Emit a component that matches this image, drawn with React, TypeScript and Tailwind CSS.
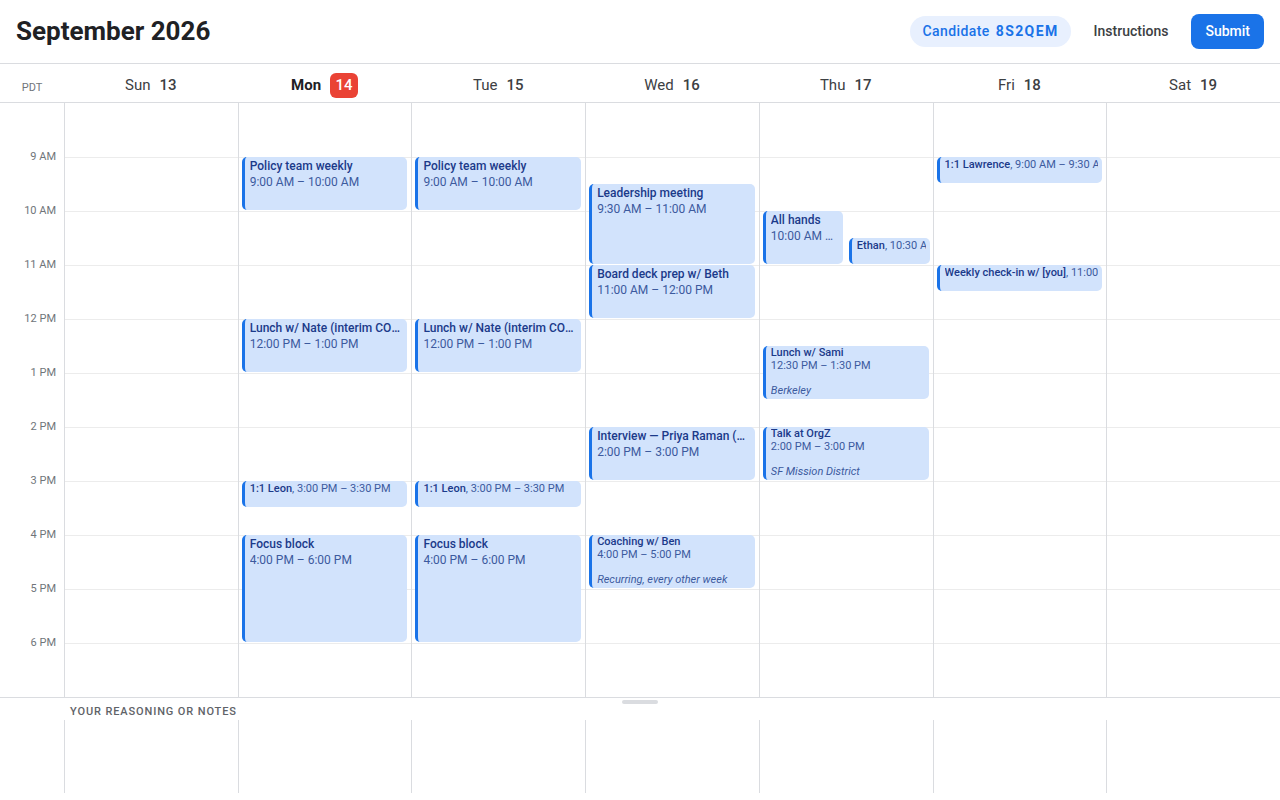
import React from "react";

const HOUR = 54;
const START = 8;

type Ev = {
  day: number;
  start: number;
  end: number;
  title: string;
  time: string;
  kind: "std" | "loc" | "compact";
  loc?: string;
  left?: number;
  right?: number;
};

const days = [
  { name: "Sun", num: 13 },
  { name: "Mon", num: 14, today: true },
  { name: "Tue", num: 15 },
  { name: "Wed", num: 16 },
  { name: "Thu", num: 17 },
  { name: "Fri", num: 18 },
  { name: "Sat", num: 19 },
];

const hours = ["", "9 AM", "10 AM", "11 AM", "12 PM", "1 PM", "2 PM", "3 PM", "4 PM", "5 PM", "6 PM"];

const events: Ev[] = [
  // Mon + Tue share the same recurring stuff
  ...[1, 2].flatMap((d) => [
    { day: d, start: 9, end: 10, title: "Policy team weekly", time: "9:00 AM – 10:00 AM", kind: "std" as const },
    { day: d, start: 12, end: 13, title: "Lunch w/ Nate (interim COO)", time: "12:00 PM – 1:00 PM", kind: "std" as const },
    { day: d, start: 15, end: 15.5, title: "1:1 Leon", time: "3:00 PM – 3:30 PM", kind: "compact" as const },
    { day: d, start: 16, end: 18, title: "Focus block", time: "4:00 PM – 6:00 PM", kind: "std" as const },
  ]),
  { day: 3, start: 9.5, end: 11, title: "Leadership meeting", time: "9:30 AM – 11:00 AM", kind: "std" },
  { day: 3, start: 11, end: 12, title: "Board deck prep w/ Beth", time: "11:00 AM – 12:00 PM", kind: "std" },
  { day: 3, start: 14, end: 15, title: "Interview — Priya Raman (candidate)", time: "2:00 PM – 3:00 PM", kind: "std" },
  { day: 3, start: 16, end: 17, title: "Coaching w/ Ben", time: "4:00 PM – 5:00 PM", kind: "loc", loc: "Recurring, every other week" },
  { day: 4, start: 10, end: 11, title: "All hands", time: "10:00 AM – 11:00 AM", kind: "std", left: 3, right: 90 },
  { day: 4, start: 10.5, end: 11, title: "Ethan", time: "10:30 AM – 11:00 AM", kind: "compact", left: 89, right: 3 },
  { day: 4, start: 12.5, end: 13.5, title: "Lunch w/ Sami", time: "12:30 PM – 1:30 PM", kind: "loc", loc: "Berkeley" },
  { day: 4, start: 14, end: 15, title: "Talk at OrgZ", time: "2:00 PM – 3:00 PM", kind: "loc", loc: "SF Mission District" },
  { day: 5, start: 9, end: 9.5, title: "1:1 Lawrence", time: "9:00 AM – 9:30 AM", kind: "compact" },
  { day: 5, start: 11, end: 11.5, title: "Weekly check-in w/ [you]", time: "11:00 AM – 11:30 AM", kind: "compact" },
];

function EventCard({ ev }: { ev: Ev }) {
  const top = (ev.start - START) * HOUR;
  const height = (ev.end - ev.start) * HOUR - 1;
  return (
    <div
      className="absolute overflow-hidden rounded-[5px] border-l-[3px] border-[#1a73e8] bg-[#d2e3fc] pl-[5px] pr-1"
      style={{ top, height, left: ev.left ?? 3, right: ev.right ?? 4 }}
    >
      {ev.kind === "std" && (
        <div className="pt-px text-[12px] leading-4">
          <div className="truncate font-medium text-[#1b3a8a]">{ev.title}</div>
          <div className="truncate text-[#3c5a9e]">{ev.time}</div>
        </div>
      )}
      {ev.kind === "loc" && (
        <div className="text-[11px] leading-[13px]">
          <div className="truncate font-medium text-[#1b3a8a]">{ev.title}</div>
          <div className="truncate text-[#3c5a9e]">{ev.time}</div>
          <div className="mt-[12px] truncate italic text-[#3c5a9e]">{ev.loc}</div>
        </div>
      )}
      {ev.kind === "compact" && (
        <div className="overflow-hidden whitespace-nowrap pt-px text-[11px] leading-[13px]">
          <span className="font-medium text-[#1b3a8a]">{ev.title}</span>
          <span className="text-[#3c5a9e]">, {ev.time}</span>
        </div>
      )}
    </div>
  );
}

export default function App() {
  return (
    <div className="flex h-screen flex-col overflow-hidden bg-white font-[Roboto,sans-serif] text-[#202124]">
      {/* top bar */}
      <header className="flex h-16 shrink-0 items-center justify-between border-b border-[#dadce0] pl-4 pr-4">
        <h1 className="text-[26px] font-bold text-[#202124]">September 2026</h1>
        <div className="flex items-center gap-[11px]">
          <div className="flex h-[31px] items-center gap-[6px] rounded-full bg-[#e8f0fe] px-3 text-[14px] text-[#1a73e8]">
            <span className="font-medium tracking-[0.03em]">Candidate</span>
            <span className="font-bold tracking-[0.1em]">8S2QEM</span>
          </div>
          <button className="px-3 text-[14px] font-medium text-[#3c4043]">Instructions</button>
          <button className="h-[35px] rounded-lg bg-[#1a73e8] px-[14px] text-[14px] font-medium text-white">
            Submit
          </button>
        </div>
      </header>

      {/* day header row */}
      <div className="grid h-[39px] shrink-0 grid-cols-[64px_repeat(7,1fr)] border-b border-[#dadce0]">
        <div className="flex items-end justify-center pb-[7px] text-[11px] leading-[14px] text-[#70757a]">PDT</div>
        {days.map((d) => (
          <div key={d.name} className="flex items-center justify-center gap-[9px] pt-[4px] text-[15px]">
            <span className={d.today ? "font-bold text-[#202124]" : "text-[#3c4043]"}>{d.name}</span>
            {d.today ? (
              <span className="flex h-[25px] w-[28px] items-center justify-center rounded-md bg-[#ea4335] font-medium text-white">
                {d.num}
              </span>
            ) : (
              <span className="font-medium text-[#3c4043]">{d.num}</span>
            )}
          </div>
        ))}
      </div>

      {/* time grid */}
      <div className="grid h-[594px] shrink-0 grid-cols-[64px_repeat(7,1fr)]">
        <div className="flex flex-col">
          {hours.map((h, i) => (
            <div key={i} className="h-[54px] shrink-0">
              {h && (
                <span className="block -translate-y-[7px] pr-2 text-right text-[11px] leading-[14px] text-[#70757a]">
                  {h}
                </span>
              )}
            </div>
          ))}
        </div>
        {days.map((d, di) => (
          <div key={d.name} className="relative flex flex-col border-l border-[#dadce0]">
            {hours.map((_, i) => (
              <div key={i} className={`h-[54px] shrink-0 ${i > 0 ? "border-t border-[#ececec]" : ""}`} />
            ))}
            {events
              .filter((e) => e.day === di)
              .map((e, k) => (
                <EventCard key={k} ev={e} />
              ))}
          </div>
        ))}
      </div>

      {/* notes panel */}
      <div className="flex flex-1 flex-col border-t border-[#dadce0]">
        <div className="mx-auto mt-[2px] h-[4px] w-[36px] rounded-full bg-[#dadce0]" />
        <div className="pl-[70px] pt-px text-[11px] font-medium uppercase leading-[14px] tracking-[0.08em] text-[#5f6368]">
          Your reasoning or notes
        </div>
        <div className="mt-px grid h-[73px] grid-cols-[64px_repeat(7,1fr)]">
          <div />
          {days.map((d) => (
            <div key={d.name} className="border-l border-[#dadce0]" />
          ))}
        </div>
      </div>
    </div>
  );
}
